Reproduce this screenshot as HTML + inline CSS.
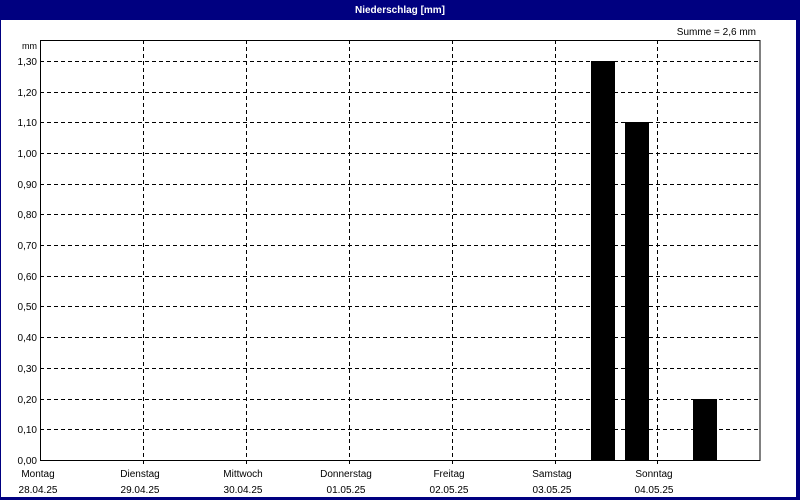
<!DOCTYPE html>
<html><head><meta charset="utf-8"><style>
html,body{margin:0;padding:0;background:#000080;}
svg{display:block}
text{font-family:"Liberation Sans",sans-serif;font-size:10px;fill:#000}
</style></head><body>
<svg width="800" height="500" xmlns="http://www.w3.org/2000/svg">
<rect x="0" y="0" width="800" height="500" fill="#000080"/>
<rect x="1" y="20" width="795" height="477" fill="#fff"/>
<text x="400" y="13" text-anchor="middle" style="fill:#fff;font-weight:bold;font-size:10px">Niederschlag [mm]</text>
<text x="756" y="35" text-anchor="end">Summe = 2,6 mm</text>
<text x="37" y="49" text-anchor="end" style="font-size:9px">mm</text>
<g stroke="#000" stroke-width="1" stroke-dasharray="4,3" fill="none">
<path d="M40 61.5H760M40 92.5H760M40 122.5H760M40 153.5H760M40 184.5H760M40 214.5H760M40 245.5H760M40 276.5H760M40 306.5H760M40 337.5H760M40 368.5H760M40 399.5H760M40 429.5H760"/>
<path d="M143.5 40V466M246.5 40V466M349.5 40V466M452.5 40V466M555.5 40V466M657.5 40V466"/>
</g>
<rect x="40.5" y="40.5" width="719.5" height="420" fill="none" stroke="#000"/>
<rect x="591" y="61" width="24" height="399" fill="#000"/>
<rect x="625" y="122" width="24" height="338" fill="#000"/>
<rect x="693" y="399" width="24" height="61" fill="#000"/>
<g text-anchor="end">
<text x="37" y="65">1,30</text><text x="37" y="96">1,20</text><text x="37" y="126">1,10</text>
<text x="37" y="157">1,00</text><text x="37" y="188">0,90</text><text x="37" y="218">0,80</text>
<text x="37" y="249">0,70</text><text x="37" y="280">0,60</text><text x="37" y="310">0,50</text>
<text x="37" y="341">0,40</text><text x="37" y="372">0,30</text><text x="37" y="403">0,20</text>
<text x="37" y="433">0,10</text><text x="37" y="464">0,00</text>
</g>
<g text-anchor="middle">
<text x="38" y="477">Montag</text><text x="38" y="493">28.04.25</text>
<text x="140" y="477">Dienstag</text><text x="140" y="493">29.04.25</text>
<text x="243" y="477">Mittwoch</text><text x="243" y="493">30.04.25</text>
<text x="346" y="477">Donnerstag</text><text x="346" y="493">01.05.25</text>
<text x="449" y="477">Freitag</text><text x="449" y="493">02.05.25</text>
<text x="552" y="477">Samstag</text><text x="552" y="493">03.05.25</text>
<text x="654" y="477">Sonntag</text><text x="654" y="493">04.05.25</text>
</g>
</svg>
</body></html>
